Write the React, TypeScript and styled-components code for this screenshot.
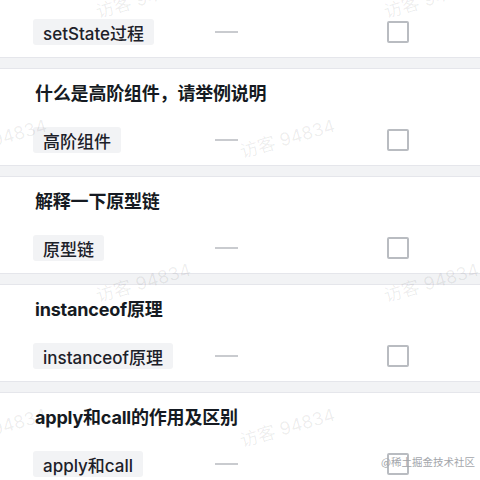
import React from "react";
import styled, { createGlobalStyle } from "styled-components";

const GlobalStyle = createGlobalStyle`
  html, body {
    margin: 0;
    padding: 0;
    background: #ffffff;
  }
  body {
    font-family: "Inter", "Noto Sans CJK SC", sans-serif;
    color: #1d2129;
    overflow: hidden;
  }
`;

const Page = styled.div`
  position: relative;
  width: 480px;
  height: 480px;
  overflow: hidden;
  background: #ffffff;
`;

const Section = styled.section<{ $cropped?: boolean }>`
  display: flex;
  flex-direction: column;
  padding-top: ${(p) => (p.$cropped ? "7px" : "0")};
`;

const Divider = styled.div`
  height: 10px;
  background: #f2f3f5;
  border-top: 1px solid #e5e6eb;
  border-bottom: 1px solid #e5e6eb;
`;

const Title = styled.h3`
  margin: 0;
  height: 46px;
  display: flex;
  align-items: center;
  padding-left: 35px;
  font-size: 18px;
  font-weight: 700;
  color: #151a22;
  letter-spacing: -0.2px;
`;

const Row = styled.div`
  height: 50px;
  display: grid;
  grid-template-columns: 182px 1fr 22px;
  align-items: center;
  padding: 0 71px 0 33px;
`;

const Tag = styled.span`
  justify-self: start;
  display: inline-flex;
  align-items: center;
  height: 26px;
  padding: 0 10px;
  border-radius: 3px;
  background: #f2f3f5;
  font-size: 17px;
  font-weight: 500;
  color: #1d2129;
  white-space: nowrap;
`;

const Dash = styled.span`
  justify-self: start;
  width: 23px;
  height: 2px;
  background: #c9cbcf;
`;

const Checkbox = styled.span`
  box-sizing: border-box;
  width: 22px;
  height: 22px;
  border: 2px solid #b9bcc1;
  border-radius: 2px;
  background: #ffffff;
`;

const Watermark = styled.span`
  position: absolute;
  transform: translate(-50%, -50%) rotate(-16deg);
  font-size: 18px;
  color: rgba(0, 0, 0, 0.07);
  white-space: nowrap;
  pointer-events: none;
  font-family: "Inter", "Noto Sans CJK SC", sans-serif;
`;

const Credit = styled.span`
  position: absolute;
  right: 5px;
  bottom: 11px;
  font-size: 10.5px;
  color: #a3a6ab;
  white-space: nowrap;
  pointer-events: none;
  font-family: "Noto Sans CJK SC", sans-serif;
`;

type Item = { title?: string; tag: string };

const items: Item[] = [
  { tag: "setState过程" },
  { title: "什么是高阶组件，请举例说明", tag: "高阶组件" },
  { title: "解释一下原型链", tag: "原型链" },
  { title: "instanceof原理", tag: "instanceof原理" },
  { title: "apply和call的作用及区别", tag: "apply和call" },
];

const marks: [number, number][] = [
  [143, -3],
  [431, -3],
  [-1, 137],
  [287, 137],
  [143, 281],
  [431, 281],
  [-1, 426],
  [287, 426],
];

export default function App() {
  return (
    <>
      <GlobalStyle />
      <Page>
        {items.map((it, i) => (
          <React.Fragment key={i}>
            {i > 0 && <Divider />}
            <Section $cropped={!it.title}>
              {it.title && <Title>{it.title}</Title>}
              <Row>
                <Tag>{it.tag}</Tag>
                <Dash />
                <Checkbox />
              </Row>
            </Section>
          </React.Fragment>
        ))}
        {marks.map(([x, y], i) => (
          <Watermark key={i} style={{ left: x, top: y }}>
            访客 94834
          </Watermark>
        ))}
        <Credit>@稀土掘金技术社区</Credit>
      </Page>
    </>
  );
}
